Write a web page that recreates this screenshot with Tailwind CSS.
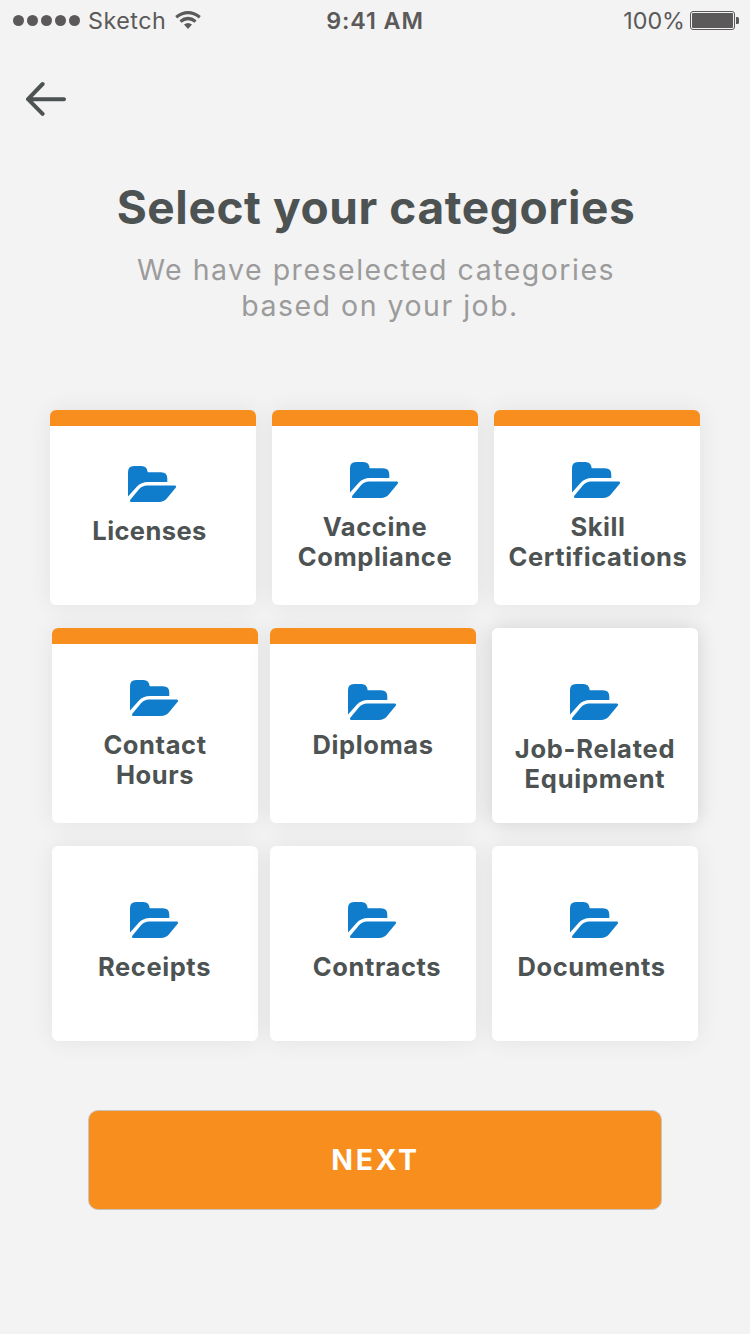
<!DOCTYPE html>
<html lang="en">
<head>
<meta charset="utf-8">
<title>Select your categories</title>
<script src="https://cdn.jsdelivr.net/npm/@tailwindcss/browser@4"></script>
</head>
<body class="w-[750px] h-[1334px] overflow-hidden bg-[#f3f3f3] font-['Inter','Liberation_Sans',sans-serif] text-[#4d5252]">
<svg class="hidden">
  <symbol id="folder" viewBox="0 0 48 36">
    <path d="M0 30.5V6Q0 0 6 0H13.5Q19 0 19.7 6.3H33Q39.3 6.3 39.3 12.5V16H20Q13 16 9 20.5Z"/>
    <path d="M2.3 33.8L11 23.3Q14.5 19.6 19 19.6H46.8Q48.9 20 47.5 22L39 32.2Q35.8 36 31 36H3.5Q1.2 36 2.3 33.8Z"/>
  </symbol>
</svg>
<header class="grid grid-cols-3 items-center h-10 pl-[13px] pr-[11px] text-[23.3px] text-[#5b5959]">
  <div class="flex items-center">
    <svg class="w-[68px] h-3 shrink-0" viewBox="0 0 68 12" fill="currentColor"><circle cx="5.5" cy="6.5" r="5.5"/><circle cx="19.5" cy="6.5" r="5.5"/><circle cx="33.5" cy="6.5" r="5.5"/><circle cx="47.5" cy="6.5" r="5.5"/><circle cx="61.5" cy="6.5" r="5.5"/></svg>
    <span class="ml-[7px] mt-0.5 w-[79px] tracking-[0.5px]">Sketch</span>
    <svg class="ml-2 w-[26px] h-[18px] shrink-0" viewBox="0 0 26 18" fill="none" stroke="currentColor" stroke-width="3.2"><path d="M1.2 6.2Q13-2.8 24.8 6.2"/><path d="M5.4 10.4Q13 4.6 20.6 10.4"/><path fill="currentColor" stroke="none" d="M9 13.6Q13 10.2 17 13.6L13 17.9Z"/></svg>
  </div>
  <div class="mt-0.5 mr-0.5 text-center font-semibold tracking-[0.9px]">9:41 AM</div>
  <div class="flex items-center justify-end">
    <span class="mt-0.5">100%</span>
    <svg class="ml-[5px] w-[49px] h-5 shrink-0" viewBox="0 0 49 20"><rect x=".5" y="1.5" width="44" height="18" rx="2.5" fill="none" stroke="currentColor"/><rect x="2" y="3" width="41" height="15" rx="1" fill="currentColor"/><path fill="currentColor" d="M46 7h1.5q1.5 0 1.5 1.5v4q0 1.5-1.5 1.5H46z"/></svg>
  </div>
</header>
<nav class="pl-[26px] pt-[41px] h-[77px]">
  <svg class="w-10 h-9" viewBox="0 0 40 36" fill="none" stroke="currentColor" stroke-width="4" stroke-linecap="round" stroke-linejoin="round"><path d="M38 18.2H2.3M16.6 3L2 18.2L16.6 32.8"/></svg>
</nav>
<main>
  <h1 class="mt-[62px] ml-0.5 text-center text-[46px] leading-[56px] font-bold tracking-[0.6px] whitespace-nowrap">Select your categories</h1>
  <p class="mt-[17px] ml-0.5 text-center text-[28.5px] leading-9 tracking-[1.5px] text-[#9b9b9b]">We have preselected categories<br><span class="ml-2">based on your job.</span></p>
  <section class="mt-[86px] flex flex-col gap-[23px] text-[25.5px] leading-[30px] font-[650] text-center tracking-[0.6px] whitespace-nowrap">
    <div class="flex gap-4 ml-[50px]">
      <article class="w-[206px] h-[195px] rounded-[6px] overflow-hidden bg-white shadow-[0_0_24px_rgba(0,0,0,0.07)] flex flex-col items-center"><div class="w-full h-4 bg-[#f78e1e]"></div><svg class="mt-10 mr-0.5 w-12 h-9 shrink-0 fill-[#0f7dcb]"><use href="#folder"/></svg><h2 class="mt-3.5 mr-[7px] tracking-[0.4px]">Licenses</h2></article>
      <article class="w-[206px] h-[195px] rounded-[6px] overflow-hidden bg-white shadow-[0_0_24px_rgba(0,0,0,0.07)] flex flex-col items-center"><div class="w-full h-4 bg-[#f78e1e]"></div><svg class="mt-9 mr-0.5 w-12 h-9 shrink-0 fill-[#0f7dcb]"><use href="#folder"/></svg><h2 class="mt-3.5">Vaccine<br>Compliance</h2></article>
      <article class="w-[206px] h-[195px] rounded-[6px] overflow-hidden bg-white shadow-[0_0_24px_rgba(0,0,0,0.07)] flex flex-col items-center"><div class="w-full h-4 bg-[#f78e1e]"></div><svg class="mt-9 mr-0.5 w-12 h-9 shrink-0 fill-[#0f7dcb]"><use href="#folder"/></svg><h2 class="mt-3.5 ml-0.5">Skill<br>Certifications</h2></article>
    </div>
    <div class="flex ml-[52px]">
      <article class="w-[206px] h-[195px] rounded-[6px] overflow-hidden bg-white shadow-[0_0_24px_rgba(0,0,0,0.07)] flex flex-col items-center"><div class="w-full h-4 bg-[#f78e1e]"></div><svg class="mt-9 mr-0.5 w-12 h-9 shrink-0 fill-[#0f7dcb]"><use href="#folder"/></svg><h2 class="mt-3.5">Contact<br>Hours</h2></article>
      <article class="ml-3 w-[206px] h-[195px] rounded-[6px] overflow-hidden bg-white shadow-[0_0_24px_rgba(0,0,0,0.07)] flex flex-col items-center"><div class="w-full h-4 bg-[#f78e1e]"></div><svg class="mt-10 mr-0.5 w-12 h-9 shrink-0 fill-[#0f7dcb]"><use href="#folder"/></svg><h2 class="mt-2.5">Diplomas</h2></article>
      <article class="ml-4 w-[206px] h-[195px] rounded-[6px] bg-white shadow-[0_0_20px_rgba(0,0,0,0.14)] flex flex-col items-center"><svg class="mt-14 mr-0.5 w-12 h-9 shrink-0 fill-[#0f7dcb]"><use href="#folder"/></svg><h2 class="mt-3.5 tracking-[0.75px]">Job-Related<br>Equipment</h2></article>
    </div>
    <div class="flex ml-[52px]">
      <article class="w-[206px] h-[195px] rounded-[6px] bg-white shadow-[0_0_24px_rgba(0,0,0,0.07)] flex flex-col items-center"><svg class="mt-14 mr-0.5 w-12 h-9 shrink-0 fill-[#0f7dcb]"><use href="#folder"/></svg><h2 class="mt-3.5 mr-px">Receipts</h2></article>
      <article class="ml-3 w-[206px] h-[195px] rounded-[6px] bg-white shadow-[0_0_24px_rgba(0,0,0,0.07)] flex flex-col items-center"><svg class="mt-14 mr-0.5 w-12 h-9 shrink-0 fill-[#0f7dcb]"><use href="#folder"/></svg><h2 class="mt-3.5 ml-2">Contracts</h2></article>
      <article class="ml-4 w-[206px] h-[195px] rounded-[6px] bg-white shadow-[0_0_24px_rgba(0,0,0,0.07)] flex flex-col items-center"><svg class="mt-14 mr-0.5 w-12 h-9 shrink-0 fill-[#0f7dcb]"><use href="#folder"/></svg><h2 class="mt-3.5 mr-[7px]">Documents</h2></article>
    </div>
  </section>
  <button class="mt-[69px] ml-[88px] block w-[574px] h-[100px] rounded-[10px] border border-[#c8c4be] bg-[#f78e1e] text-white text-[28.5px] font-bold tracking-[2.6px]"><span class="ml-px">NEXT</span></button>
</main>
</body>
</html>
